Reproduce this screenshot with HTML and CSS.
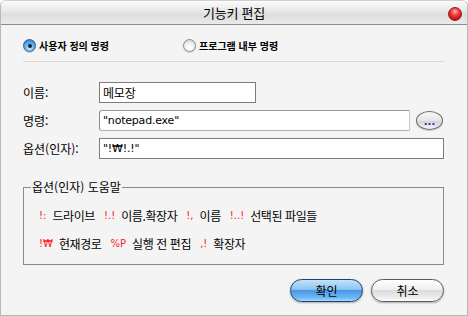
FILE: index.html
```html
<!DOCTYPE html>
<html lang="ko">
  <head>
    <meta charset="UTF-8" />
    <title>기능키 편집</title>
    <link rel="stylesheet" href="styles.css">
  </head>
  <body>
    <div class="window">
      <div class="titlebar">
        <span class="title">기능키 편집</span>
        <span class="close"></span>
      </div>
      <div class="content">
        <div class="radios">
          <label class="radio"><span class="dot on"></span>사용자 정의 명령</label>
          <label class="radio second"><span class="dot"></span>프로그램 내부 명령</label>
        </div>
        <div class="sep"></div>
        <div class="form">
          <div class="row">
            <span class="lbl">이름:</span>
            <div class="field name">메모장</div>
          </div>
          <div class="row">
            <span class="lbl">명령:</span>
            <div class="field cmd">"notepad.exe"</div>
            <button class="browse">...</button>
          </div>
          <div class="row">
            <span class="lbl">옵션(인자):</span>
            <div class="field opt">"!₩!.!"</div>
          </div>
        </div>
        <fieldset class="help">
          <legend>옵션(인자) 도움말</legend>
          <div class="line">
            <span class="code">!:</span><span class="desc">드라이브</span>
            <span class="code">!.!</span><span class="desc">이름.확장자</span>
            <span class="code">!,</span><span class="desc">이름</span>
            <span class="code">!..!</span><span class="desc">선택된 파일들</span>
          </div>
          <div class="line">
            <span class="code">!₩</span><span class="desc">현재경로</span>
            <span class="code">%P</span><span class="desc">실행 전 편집</span>
            <span class="code">,!</span><span class="desc">확장자</span>
          </div>
        </fieldset>
        <div class="actions">
          <button class="btn ok">확인</button>
          <button class="btn cancel">취소</button>
        </div>
      </div>
    </div>
  </body>
</html>
```

FILE: styles.css
```css
*{
    margin: 0;
    padding: 0;
    box-sizing: border-box;
}
body{
    background: #ffffff;
    font-family: "Noto Sans CJK KR", "Noto Sans", sans-serif;
    font-size: 12px;
    color: #000;
}
.window{
    width: 468px;
    height: 316px;
    border: 1px solid #b8b8b8;
    border-top-color: #d0d0d0;
    border-radius: 6px 6px 0 0;
    background: #f4f4f4;
    overflow: hidden;
}
.titlebar{
    height: 24px;
    border-bottom: 1px solid #8c8c8c;
    background: linear-gradient(#fbfbfb, #ececec 35%, #dedede 60%, #eaeaea);
    display: flex;
    align-items: center;
    justify-content: center;
    position: relative;
}
.title{
    font-size: 13px;
    line-height: 16px;
    letter-spacing: -0.2px;
}
.close{
    position: absolute;
    right: 5px;
    top: 6px;
    width: 14px;
    height: 14px;
    border-radius: 50%;
    border: 1px solid #8e1b1b;
    background: radial-gradient(circle at 50% 30%, #ffb4b4 0, #f04040 35%, #c41010 75%, #e04a4a 100%);
}
.content{
    padding: 14px 22px 0 22px;
}
.radios{
    display: flex;
    height: 13px;
    align-items: center;
}
.radio{
    display: flex;
    align-items: center;
    gap: 3px;
    font-size: 10px;
    font-weight: bold;
    line-height: 13px;
    width: 160px;
}
.dot{
    width: 13px;
    height: 13px;
    border-radius: 50%;
    border: 1px solid #8a8a8a;
    background: radial-gradient(circle at 50% 70%, #ffffff 0, #f2f2f2 45%, #c8c8c8 100%);
    box-shadow: 0 1px 1px rgba(0,0,0,0.15);
    position: relative;
}
.dot.on{
    border-color: #3a5a86;
    background: radial-gradient(circle at 50% 75%, #c6ecff 0, #64b2ee 45%, #2f6fc4 100%);
}
.dot.on::after{
    content: "";
    position: absolute;
    left: 3.5px;
    top: 3.5px;
    width: 4px;
    height: 4px;
    border-radius: 50%;
    background: #10213a;
}
.sep{
    height: 1px;
    background: #d8d8d8;
    margin: 9px 0 20px 0;
    width: 421px;
}
.form{
    display: flex;
    flex-direction: column;
    gap: 7px;
}
.row{
    display: flex;
    align-items: center;
    height: 21px;
}
.lbl{
    width: 76px;
    line-height: 16px;
}
.field{
    height: 21px;
    border: 1px solid #7c7c7c;
    background: #fff;
    padding: 0 3px;
    line-height: 19px;
    font-family: "DejaVu Sans", sans-serif;
    font-size: 11px;
    letter-spacing: -0.2px;
}
.field.name{
    width: 157px;
    font-family: "Noto Sans CJK KR", sans-serif;
    font-size: 12px;
}
.field.cmd{
    width: 311px;
    border-color: #9a9a9a #c8c8c8 #b0b0b0 #8a8a8a;
    border-radius: 3px 0 0 3px;
}
.field.opt{
    width: 345px;
}
.browse{
    width: 27px;
    height: 19px;
    margin-left: 6px;
    border-radius: 50%;
    border: 1px solid #6a6a6a;
    background: linear-gradient(#f8f8f8, #e6e6e6 50%, #d4d4d4 55%, #f4f4f4);
    color: #2a2ad0;
    font-family: "DejaVu Sans", sans-serif;
    font-size: 10px;
    font-weight: bold;
    line-height: 12px;
    padding-top: 2px;
    box-shadow: 0 1px 1px rgba(0,0,0,0.2);
}
.help{
    margin-top: 21px;
    width: 421px;
    height: 85px;
    border: 1px solid #8a8a8a;
    padding: 8px 0 0 7px;
}
.help legend{
    padding: 0 1px;
    line-height: 14px;
    font-size: 12px;
}
.line{
    height: 28px;
    display: flex;
    align-items: center;
    line-height: 16px;
    padding-left: 8px;
}
.code{
    color: #ff2020;
    font-family: "DejaVu Sans", sans-serif;
    font-size: 10px;
    margin-right: 6px;
}
.desc{
    margin-right: 9px;
    letter-spacing: -0.4px;
}
.actions{
    display: flex;
    justify-content: flex-end;
    gap: 8px;
    margin-top: 14px;
    width: 421px;
}
.btn{
    width: 73px;
    height: 23px;
    border-radius: 12px;
    font-family: "Noto Sans CJK KR", sans-serif;
    font-size: 12px;
    line-height: 16px;
    color: #000;
    box-shadow: 0 1px 2px rgba(0,0,0,0.3);
}
.ok{
    border: 1px solid #1f3f70;
    background: linear-gradient(#c4e2fb, #8cc4f2 45%, #4a98e4 50%, #6cb8f4 85%, #a6dcff);
}
.cancel{
    border: 1px solid #5c5c5c;
    background: linear-gradient(#ffffff, #f0f0f0 45%, #dcdcdc 50%, #eeeeee 85%, #ffffff);
}
```
